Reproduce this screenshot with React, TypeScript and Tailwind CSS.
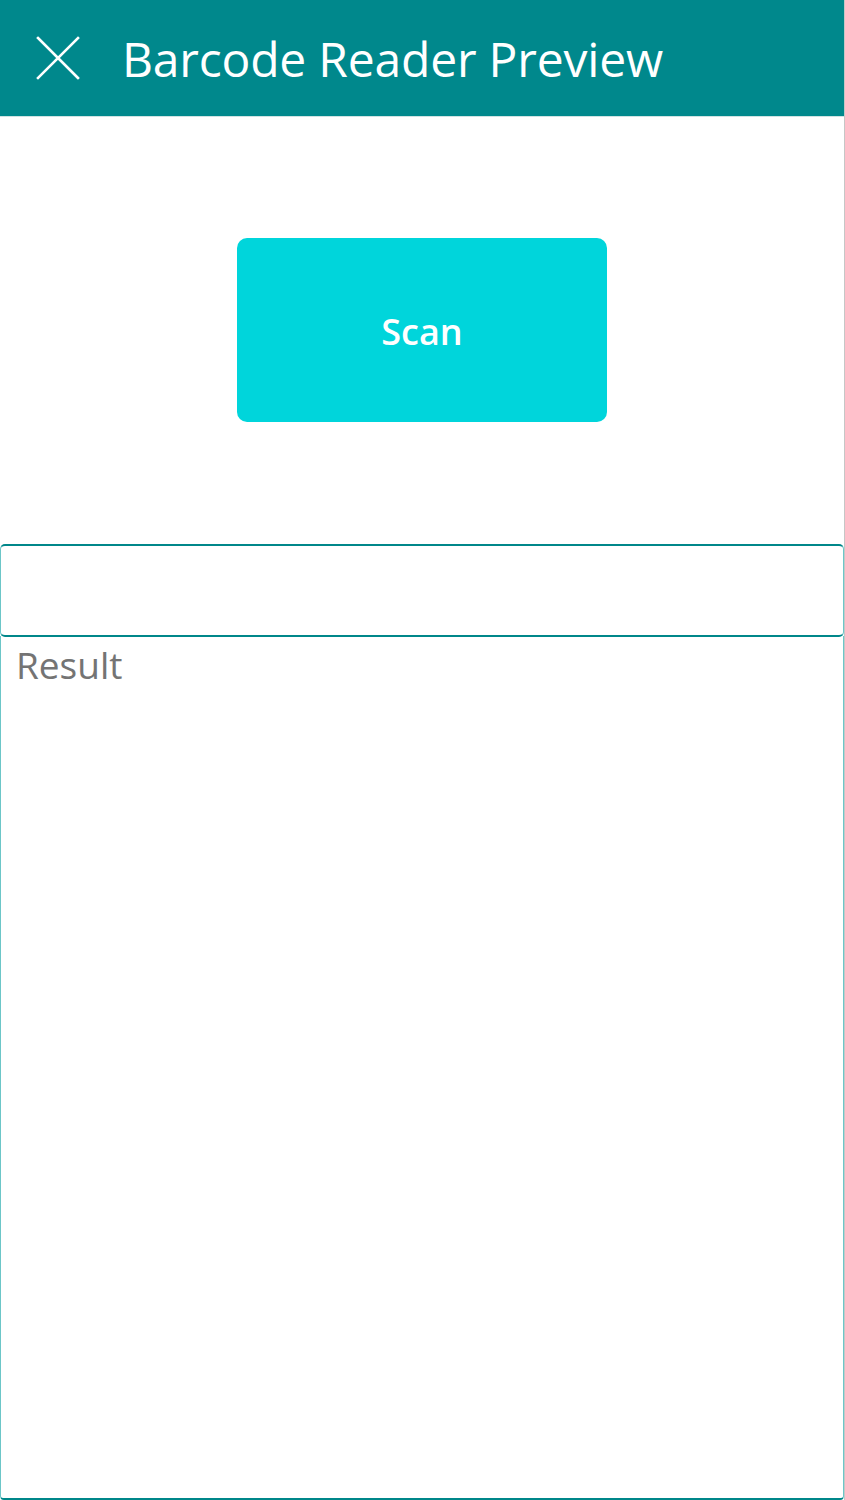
import React from 'react';

function CloseIcon() {
  return (
    <svg width="44" height="44" viewBox="0 0 44 44" className="shrink-0">
      <path d="M2 2L42 42M42 2L2 42" stroke="white" strokeWidth="2.6" strokeLinecap="square" fill="none" />
    </svg>
  );
}

export default function App() {
  return (
    <div
      className="w-[845px] h-[1500px] bg-white border-r border-[#c6c6c6] flex flex-col overflow-hidden"
      style={{ fontFamily: '"Open Sans", "Noto Sans", sans-serif' }}
    >
      <header className="h-[117px] shrink-0 bg-[#00888c] border-b border-[#cfe3e3] flex items-center pl-[36px]">
        <CloseIcon />
        <h1 className="ml-[42px] text-white text-[48px] leading-none font-normal tracking-[-0.2px] mt-[2px]">
          Barcode Reader Preview
        </h1>
      </header>

      <div className="flex justify-center pt-[121px] pb-[122px]">
        <button className="w-[370px] h-[184px] rounded-[10px] bg-[#00d5db] text-white text-[36px] font-semibold pt-[3px]">
          Scan
        </button>
      </div>

      <input
        className="h-[93px] w-[844px] shrink-0 bg-white border-y-2 border-x border-y-[#00878a] border-x-[#6cc6c8] rounded-[5px] outline-none"
        type="text"
      />

      <div className="flex-1 w-[844px] -mt-[1px] border-b-2 border-x border-b-[#00878a] border-x-[#6cc6c8] rounded-b-[4px] px-[15px] pt-[4px]">
        <span className="text-[37px] leading-[50px] text-[#747474]">Result</span>
      </div>
    </div>
  );
}
